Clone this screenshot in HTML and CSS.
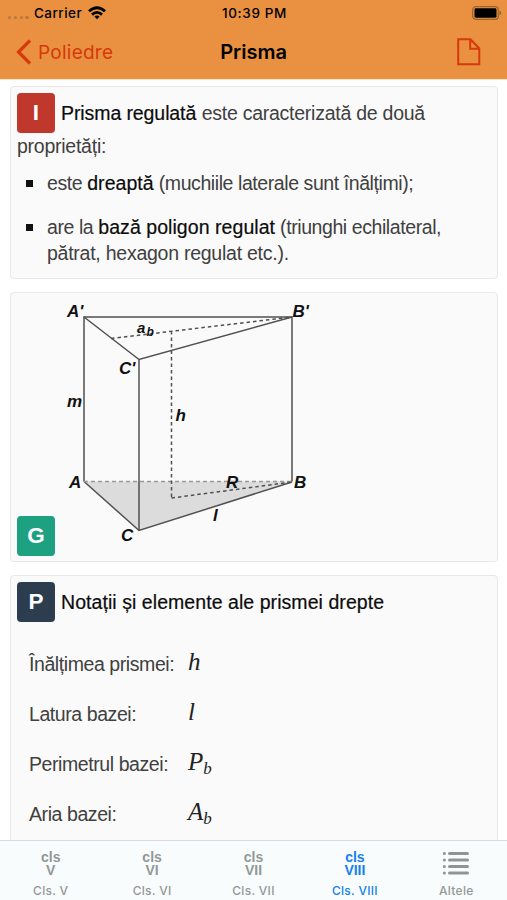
FILE: index.html
```html
<!DOCTYPE html>
<html lang="ro">
<head>
<meta charset="utf-8">
<title>Prisma</title>
<link rel="stylesheet" href="styles.css">
</head>
<body>
<div class="app">
  <header class="header">
    <div class="status">
      <div class="carrier"><span class="dots"><i></i><i></i><i></i><i></i></span><span class="carrier-name">Carrier</span>
        <svg class="wifi" viewBox="0 0 18 14" width="18" height="14"><g fill="none" stroke="#000" stroke-width="2.8"><path d="M1 5.2Q9-1.8 17 5.2"/><path d="M4 8.6Q9 4.200 14 8.6"/></g><path d="M6.3 10.5Q9 8.4 11.7 10.5L9 13.3Z"/></svg>
      </div>
      <div class="time">10:39 PM</div>
      <svg class="battery" viewBox="0 0 30 14" width="30" height="14"><rect x=".7" y=".7" width="25.6" height="12.6" rx="3" fill="none" stroke="#96642c" stroke-width="1.2"/><rect x="2.5" y="2.3" width="22" height="9.4" rx="1.4"/><path d="M27.5 4.8Q29.3 5.3 29.3 7T27.5 9.2Z" fill="#96642c"/></svg>
    </div>
    <nav class="nav">
      <a class="back"><svg viewBox="0 0 16 26" width="16" height="26"><path d="M14 1.5 2.5 13 14 24.5" fill="none" stroke="#d6390b" stroke-width="3.2"/></svg><span>Poliedre</span></a>
      <h1>Prisma</h1>
      <svg class="doc" viewBox="0 0 24 28" width="24" height="28"><path d="M1.2 1.2H13.5L22.3 10.5V26.3H1.2ZM13.2 1.2V10.8H22.3" fill="none" stroke="#d6390b" stroke-width="2"/></svg>
    </nav>
  </header>
  <main class="content">
    <section class="card intro">
      <p class="lead"><span class="tag red">I</span><span class="strong lead-term">Prisma regulată</span> <span class="snug">este caracterizată de două</span><br><span class="snug">proprietăți:</span></p>
      <ul>
        <li><span class="tight">este <b>dreaptă</b> (muchiile laterale sunt înălțimi);</span></li>
        <li><span class="tight">are la <b>bază poligon regulat</b> (triunghi echilateral,</span><br><span class="snug">pătrat, hexagon regulat etc.).</span></li>
      </ul>
    </section>
    <section class="card figure">
      <svg class="prism" viewBox="11 293 320 268" width="320" height="268">
        <path d="M84 481.500H291.500L139 530.500Z" fill="#dcdcdc"/>
        <g fill="none" stroke="#505050" stroke-width="1.5">
          <path d="M84 481.500V317H292V481.500"/><path d="M84 317 139 359.500 292 317"/><path d="M139 359.500V530.500"/><path d="M84 481.500 139 530.500 292 482"/>
          <path d="M84 481.500H292" stroke="#999" stroke-width="1.300" stroke-dasharray="4 3"/>
          <path d="M111 338.500 292 317M171.500 331V498M171.500 498 292 482" stroke-dasharray="3.500 3"/>
        </g>
        <g class="labels"><text x="67" y="317">A'</text><text x="292.500" y="317">B'</text><text x="119" y="374">C'</text><text x="137" y="333" class="small">a</text><text x="146.500" y="335.500" class="sub">b</text><text x="67" y="406.500">m</text><text x="175.500" y="421">h</text><text x="69" y="488">A</text><text x="294" y="488">B</text><text x="121" y="541">C</text><text x="226" y="488">R</text><text x="213" y="521">l</text></g>
      </svg>
      <span class="tag green">G</span>
    </section>
    <section class="card notation">
      <p class="lead"><span class="tag navy">P</span><span class="strong wide">Notații și elemente ale prismei drepte</span></p>
      <dl>
        <dt>Înălțimea prismei:</dt><dd>h</dd>
        <dt>Latura bazei:</dt><dd>l</dd>
        <dt>Perimetrul bazei:</dt><dd>P<sub>b</sub></dd>
        <dt>Aria bazei:</dt><dd>A<sub>b</sub></dd>
      </dl>
    </section>
  </main>
  <footer class="tabs">
    <div class="tab"><div class="symbol"><span>cls</span><span>V</span></div><span>Cls. V</span></div>
    <div class="tab"><div class="symbol"><span>cls</span><span>VI</span></div><span>Cls. VI</span></div>
    <div class="tab"><div class="symbol"><span>cls</span><span>VII</span></div><span>Cls. VII</span></div>
    <div class="tab active"><div class="symbol"><span>cls</span><span>VIII</span></div><span>Cls. VIII</span></div>
    <div class="tab"><div class="symbol"><svg viewBox="0 0 28 26" width="28" height="26"><g stroke="#8f9595" stroke-width="3" stroke-linecap="round"><path d="M7.500 2.500H25.500M7.500 9H25.500M7.500 15.500H25.500M7.500 22H25.500M2.300 2.500h.1M2.300 9h.1M2.300 15.500h.1M2.300 22h.1"/></g></svg></div><span>Altele</span></div>
  </footer>
</div>
</body>
</html>
```
FILE: styles.css
```css
* { box-sizing: border-box; }
body { margin: 0; background: #fff; font-family: "Liberation Sans", sans-serif; }
.app { width: 507px; height: 900px; display: flex; flex-direction: column; overflow: hidden; }
.header { height: 79px; flex: none; background: #e99141; box-shadow: 0 1px 0 #fbe6ca; font-family: Inter, sans-serif; color: #000; }
.status { height: 26px; display: grid; grid-template-columns: 1fr auto 1fr; align-items: center; padding: 0 6px 0 8px; font-size: 13.5px; font-weight: 500; }
.carrier { display: flex; align-items: center; }
.dots { display: flex; gap: 2.5px; width: 26px; padding-top: 9px; }
.dots i { width: 3.3px; height: 3.3px; border-radius: 50%; background: #b87940; }
.carrier-name { letter-spacing: .45px; }
.wifi { margin-left: 6px; }
.time { letter-spacing: .65px; }
.battery { justify-self: end; margin-right: -1px; }
.nav { height: 52px; display: grid; grid-template-columns: 1fr auto 1fr; align-items: center; padding: 0 26px 0 16px; }
.back { display: flex; align-items: center; gap: 6px; color: #d6390b; font-size: 19px; letter-spacing: .25px; }
h1 { margin: 0; font-size: 20px; font-weight: 600; padding-left: 10px; }
.doc { justify-self: end; }
.content { flex: 1; min-height: 0; overflow: hidden; padding: 7px 9px 0 10px; display: flex; flex-direction: column; gap: 13px; }
.card { flex: none; border: 1px solid #e8e8e8; border-radius: 4px; background: #fafafa; color: #404040; font-size: 19.5px; }
.intro { height: 193px; padding: 6px; }
.lead { margin: 0; line-height: 26px; }
.intro .lead { margin-bottom: -1px; }
.tag { display: inline-flex; width: 38px; height: 40px; margin-right: 6px; border-radius: 4px; color: #fff; font-size: 22.500px; font-weight: 700; align-items: center; justify-content: center; }
.red { background: #c0372b; }
.green { background: #1da181; }
.navy { background: #2c3d50; }
.strong, b { color: #0c0c0c; font-weight: 400; -webkit-text-stroke: .2px #0c0c0c; }
.lead-term { letter-spacing: -.09px; }
.snug { letter-spacing: -.25px; }
.tight { letter-spacing: -.42px; }
.tight b { letter-spacing: .06px; }
.wide { letter-spacing: .06px; }
ul { list-style: none; margin: 12px 0 0; padding: 0 0 0 30px; line-height: 26px; }
li { position: relative; margin-bottom: 18px; white-space: nowrap; }
li::before { content: ""; position: absolute; left: -21px; top: 10px; width: 7px; height: 7px; background: #111; }
.figure { height: 270px; position: relative; }
.prism { display: block; }
.figure .tag { position: absolute; left: 6px; bottom: 5px; }
.labels { font: italic 700 17px "Liberation Sans", sans-serif; fill: #111; }
.labels .small { font-size: 15px; }
.labels .sub { font-size: 12px; }
.notation { height: 300px; padding: 6px; }
dl { margin: 27px 0 0 12px; display: grid; grid-template-columns: 159px auto; grid-auto-rows: 50px; line-height: 30px; }
dt { white-space: nowrap; letter-spacing: -.42px; }
dd { margin: 0; font: italic 25px/26px "Liberation Serif", serif; color: #222; }
sub { font-size: 17px; line-height: 0; vertical-align: -4px; }
.tabs { height: 60px; flex: none; position: relative; border-top: 1px solid #d9dcdc; background: #f8fcfc; display: grid; grid-template-columns: repeat(5, 1fr); color: #929898; }
.tab { display: flex; flex-direction: column; align-items: center; font: 500 12px/16px Inter, sans-serif; letter-spacing: .3px; }
.symbol { height: 27px; margin: 10px 0 5px; font: 700 14px/13px "Liberation Sans", sans-serif; letter-spacing: 0; display: flex; flex-direction: column; align-items: center; }
.symbol svg { display: block; }
.active { color: #1680ee; }
```
